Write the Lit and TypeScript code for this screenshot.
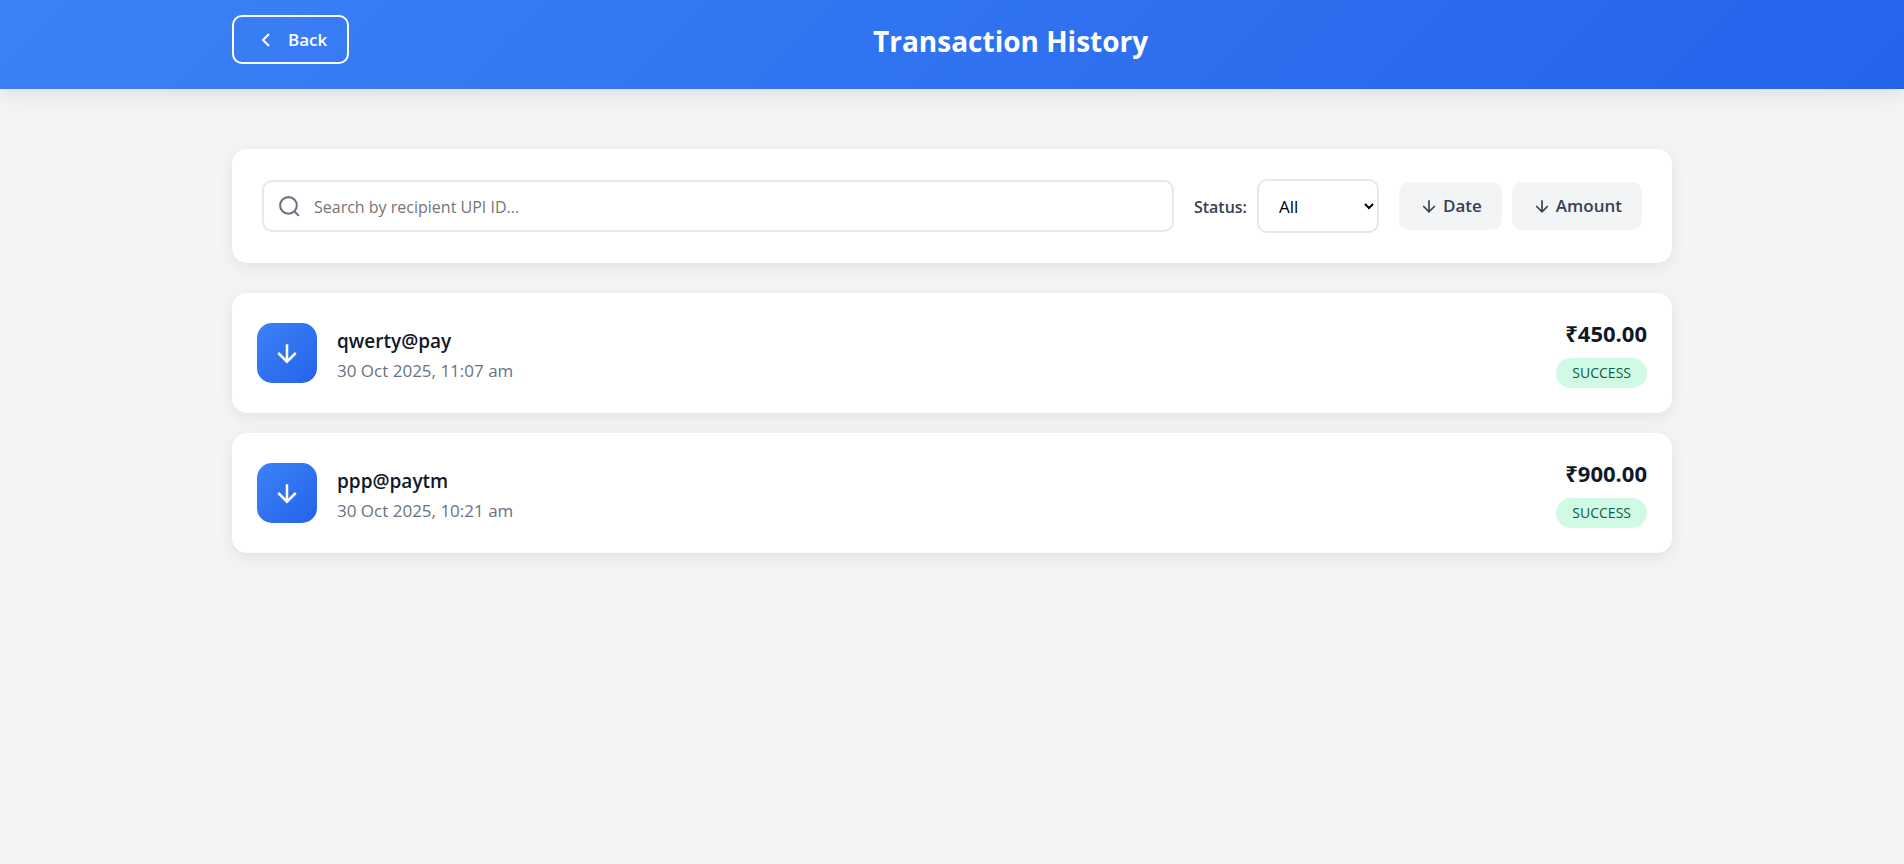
import { LitElement, html, svg, css } from "lit";
import { customElement, property, state } from "lit/decorators.js";

interface Transaction {
  recipient: string;
  time: string;
  amount: string;
  status: string;
}

const arrowDown = svg`<path d="M12 5v14M19 12l-7 7-7-7" />`;

@customElement("transaction-card")
export class TransactionCard extends LitElement {
  @property({ attribute: false }) item!: Transaction;

  static styles = css`
    :host {
      display: block;
    }
    .card {
      display: flex;
      align-items: center;
      gap: 20px;
      padding: 25px;
      border-radius: 15px;
      background: #fff;
      box-shadow: 0 4px 15px rgba(0, 0, 0, 0.08);
    }
    .tile {
      display: flex;
      align-items: center;
      justify-content: center;
      width: 60px;
      height: 60px;
      flex: none;
      border-radius: 15px;
      background: linear-gradient(135deg, #3b82f6, #2563eb);
      color: #fff;
    }
    .tile svg {
      width: 30px;
      height: 30px;
      fill: none;
      stroke: currentColor;
      stroke-width: 2;
    }
    .info {
      display: flex;
      flex-direction: column;
      gap: 2px;
      flex: 1;
      min-width: 0;
      padding-top: 2px;
    }
    .name {
      margin: 0;
      font-size: 19px;
      line-height: 32px;
      font-weight: 600;
      color: #111827;
    }
    .time {
      font-size: 17px;
      line-height: 24px;
      color: #6b7280;
    }
    .result {
      display: flex;
      flex-direction: column;
      align-items: flex-end;
      gap: 10px;
    }
    .amount {
      font-size: 22px;
      line-height: 30px;
      font-weight: 700;
      color: #111827;
    }
    .badge {
      padding: 0 16px;
      border-radius: 20px;
      background: #d1fae5;
      color: #065f46;
      font-size: 14px;
      line-height: 30px;
      font-weight: 500;
    }
  `;

  render() {
    const { recipient, time, amount, status } = this.item;
    return html`
      <article class="card">
        <div class="tile"><svg viewBox="0 0 24 24" aria-hidden="true">${arrowDown}</svg></div>
        <div class="info">
          <h2 class="name">${recipient}</h2>
          <time class="time">${time}</time>
        </div>
        <div class="result">
          <span class="amount">${amount}</span>
          <span class="badge">${status}</span>
        </div>
      </article>
    `;
  }
}

@customElement("app-root")
export class AppRoot extends LitElement {
  @state() private query = "";
  @state() private status = "All";

  private items: Transaction[] = [
    { recipient: "qwerty@pay", time: "30 Oct 2025, 11:07 am", amount: "₹450.00", status: "SUCCESS" },
    { recipient: "ppp@paytm", time: "30 Oct 2025, 10:21 am", amount: "₹900.00", status: "SUCCESS" },
  ];

  static styles = css`
    :host {
      display: block;
      min-height: 100vh;
      background: #f3f4f6;
      font-family: "Open Sans", "Noto Sans", sans-serif;
      color: #111827;
    }
    * {
      box-sizing: border-box;
    }
    button,
    input,
    select {
      font-family: inherit;
    }
    svg {
      flex: none;
      fill: none;
      stroke: currentColor;
      stroke-width: 2;
    }
    .header {
      padding: 15px 0 25px;
      background: linear-gradient(135deg, #3b82f6, #2563eb);
      box-shadow: 0 4px 20px rgba(0, 0, 0, 0.1);
      color: #fff;
    }
    .container {
      max-width: 1440px;
      margin: 0 auto;
    }
    .bar {
      display: flex;
      align-items: flex-end;
    }
    .back {
      display: flex;
      align-items: center;
      gap: 10px;
      padding: 10px 20px;
      border: 2px solid #fff;
      border-radius: 10px;
      background: transparent;
      color: #fff;
      font-size: 17px;
      line-height: 25px;
      font-weight: 600;
    }
    .back svg {
      width: 24px;
      height: 24px;
    }
    .title {
      flex: 1;
      margin: 0;
      text-align: center;
      font-size: 28px;
      line-height: 46px;
      font-weight: 700;
    }
    .content {
      padding: 60px 0;
    }
    .filters {
      display: flex;
      align-items: center;
      gap: 20px;
      margin-bottom: 30px;
      padding: 30px;
      border-radius: 15px;
      background: #fff;
      box-shadow: 0 4px 15px rgba(0, 0, 0, 0.08);
    }
    .search {
      display: flex;
      align-items: center;
      gap: 12px;
      flex: 1;
      min-width: 0;
      padding: 0 13px;
      border: 2px solid #e5e7eb;
      border-radius: 10px;
      color: #6b7280;
    }
    .search svg {
      width: 25px;
      height: 25px;
    }
    .search input {
      flex: 1;
      min-width: 0;
      padding: 13px 0 11px;
      border: 0;
      outline: 0;
      background: none;
      font-size: 16px;
      line-height: 24px;
      height: 48px;
      color: #111827;
    }
    .search input::placeholder {
      color: #757575;
    }
    .status {
      display: flex;
      align-items: center;
      gap: 10px;
    }
    .status label {
      padding-top: 2px;
      font-size: 16px;
      line-height: 24px;
      font-weight: 600;
      color: #374151;
    }
    .status select {
      width: 122px;
      height: 54px;
      padding: 0 16px;
      border: 2px solid #e5e7eb;
      border-radius: 10px;
      background: #fff;
      color: #000;
      font-size: 17px;
    }
    .sorts {
      display: flex;
      gap: 10px;
    }
    .sort {
      display: flex;
      align-items: center;
      gap: 4px;
      padding: 11px 20px;
      border: 0;
      border-radius: 10px;
      background: #f3f4f6;
      color: #374151;
      font-size: 17px;
      line-height: 26px;
      font-weight: 600;
    }
    .sort svg {
      width: 20px;
      height: 20px;
    }
    .list {
      display: flex;
      flex-direction: column;
      gap: 20px;
    }
  `;

  private sortButton(label: string) {
    return html`<button class="sort" type="button">
      <svg viewBox="0 0 24 24" aria-hidden="true">${arrowDown}</svg>${label}
    </button>`;
  }

  render() {
    const shown = this.items.filter(
      (t) => t.recipient.includes(this.query) && (this.status === "All" || t.status === this.status.toUpperCase()),
    );
    return html`
      <header class="header">
        <div class="container bar">
          <button class="back" type="button">
            <svg viewBox="0 0 24 24" aria-hidden="true"><path d="M15 18l-6-6 6-6" /></svg>Back
          </button>
          <h1 class="title">Transaction History</h1>
        </div>
      </header>
      <main class="container content">
        <section class="filters">
          <div class="search">
            <svg viewBox="0 0 24 24" aria-hidden="true">
              <circle cx="11" cy="11" r="8" />
              <path d="M21 21l-4-4" />
            </svg>
            <input
              type="text"
              aria-label="Search by recipient UPI ID"
              placeholder="Search by recipient UPI ID..."
              .value=${this.query}
              @input=${(e: Event) => (this.query = (e.target as HTMLInputElement).value)}
            />
          </div>
          <div class="status">
            <label for="status">Status:</label>
            <select id="status" @change=${(e: Event) => (this.status = (e.target as HTMLSelectElement).value)}>
              <option>All</option>
              <option>Success</option>
              <option>Failed</option>
            </select>
          </div>
          <div class="sorts">${this.sortButton("Date")}${this.sortButton("Amount")}</div>
        </section>
        <section class="list">
          ${shown.map((t) => html`<transaction-card .item=${t}></transaction-card>`)}
        </section>
      </main>
    `;
  }
}
